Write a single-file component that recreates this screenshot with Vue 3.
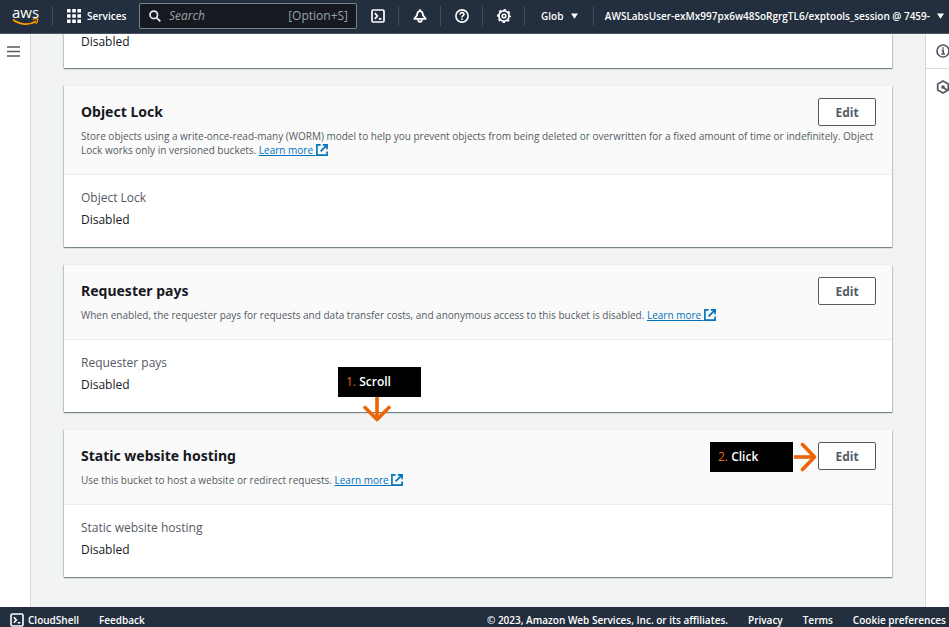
<script setup>
const panels = [
  {
    id: 'object-lock',
    title: 'Object Lock',
    text: 'Store objects using a write-once-read-many (WORM) model to help you prevent objects from being deleted or overwritten for a fixed amount of time or indefinitely. Object Lock works only in versioned buckets.',
  },
  {
    id: 'requester-pays',
    title: 'Requester pays',
    text: 'When enabled, the requester pays for requests and data transfer costs, and anonymous access to this bucket is disabled.',
    scrollHint: true,
  },
  {
    id: 'static-hosting',
    title: 'Static website hosting',
    text: 'Use this bucket to host a website or redirect requests.',
    clickHint: true,
  },
]
</script>

<template>
  <div class="shell">
    <header class="topbar">
      <a class="logo" href="#" aria-label="aws">
        <span class="logo-text">aws</span>
        <svg class="smile" viewBox="0 0 28 8" aria-hidden="true">
          <path d="M1 1.4C8 7.2 18 7.6 25 3.2" fill="none" stroke="#f90" stroke-width="1.8" />
          <path d="M21.5 1.2C24 .4 26.3 .4 26.6 1C26.9 2 26 4.6 24.6 6" fill="none" stroke="#f90" stroke-width="1.3" />
        </svg>
      </a>
      <button class="services" type="button">
        <svg viewBox="0 0 14 14" width="14" height="14" fill="#fff" aria-hidden="true">
          <path d="M0 0h3.6v3.6H0zM5.2 0h3.6v3.6H5.2zM10.4 0H14v3.6h-3.6zM0 5.2h3.6v3.6H0zM5.2 5.2h3.6v3.6H5.2zM10.4 5.2H14v3.6h-3.6zM0 10.4h3.6V14H0zM5.2 10.4h3.6V14H5.2zM10.4 10.4H14V14h-3.6z" />
        </svg>
        <span>Services</span>
      </button>
      <label class="search">
        <svg viewBox="0 0 14 14" width="12" height="12" fill="none" stroke="#e6eaea" stroke-width="2" aria-hidden="true">
          <circle cx="5.6" cy="5.6" r="4.4" />
          <path d="M8.8 8.8L13.2 13.2" />
        </svg>
        <input type="text" placeholder="Search" aria-label="Search" />
        <span class="shortcut">[Option+S]</span>
      </label>
      <nav class="tools">
        <button class="tool" type="button" aria-label="CloudShell">
          <svg viewBox="0 0 14 14" width="14" height="14" fill="none" stroke="#fff" stroke-width="1.7" aria-hidden="true">
            <rect x="1" y="1" width="12" height="12" rx="1.2" />
            <path d="M3.8 4.2L6.4 7L3.8 9.8M7.8 9.8h2.6" />
          </svg>
        </button>
        <button class="tool" type="button" aria-label="Notifications">
          <svg viewBox="0 0 14 14" width="14" height="14" fill="none" stroke="#fff" stroke-width="1.8" stroke-linejoin="round" aria-hidden="true">
            <path d="M7 .2V2M1.3 9.8L4 6.4C4.2 3.4 5.2 2.2 7 2.2s2.8 1.2 3 4.2L12.7 9.8z" />
            <path d="M5.2 10.4c0 3.2 3.6 3.2 3.6 0" />
          </svg>
        </button>
        <button class="tool" type="button" aria-label="Help">
          <svg viewBox="0 0 14 14" width="14" height="14" fill="none" stroke="#fff" stroke-width="1.6" aria-hidden="true">
            <circle cx="7" cy="7" r="6.1" />
            <path d="M5 5.6C5 2.8 9.1 3 9 5.5C8.9 6.8 7 6.7 7 8.4M7 9.4v1.5" />
          </svg>
        </button>
        <button class="tool" type="button" aria-label="Settings">
          <svg viewBox="0 0 14 14" width="14" height="14" fill="none" stroke="#fff" aria-hidden="true">
            <circle cx="7" cy="7" r="5.1" stroke-width="1.8" />
            <circle cx="7" cy="7" r="6.3" stroke-width="1.4" stroke-dasharray="2.5 2.448" stroke-dashoffset="1.25" />
            <circle cx="7" cy="7" r="1.8" stroke-width="1.6" />
          </svg>
        </button>
      </nav>
      <button class="region" type="button">
        <span>Glob</span>
        <svg class="caret" viewBox="0 0 8 6" aria-hidden="true"><path d="M0 0h8L4 6z" fill="#fff" /></svg>
      </button>
      <button class="account" type="button">
        <span>AWSLabsUser-exMx997px6w48SoRgrgTL6/exptools_session @ 7459-</span>
        <svg class="caret" viewBox="0 0 8 6" aria-hidden="true"><path d="M0 0h8L4 6z" fill="#fff" /></svg>
      </button>
    </header>

    <div class="workspace">
      <aside class="rail left">
        <button class="rail-button" type="button" aria-label="Open navigation">
          <svg viewBox="0 0 13 11" width="13" height="11" stroke="#545b64" stroke-width="1.6" aria-hidden="true">
            <path d="M0 1h13M0 5.5h13M0 10h13" />
          </svg>
        </button>
      </aside>

      <main class="content">
        <section class="card first">
          <div class="value">Disabled</div>
        </section>

        <section v-for="p in panels" :key="p.id" class="card">
          <div class="card-head">
            <div class="title-row">
              <h2>{{ p.title }}</h2>
              <div class="action">
                <div v-if="p.clickHint" class="hint click-hint">
                  <div class="hint-box"><b>2.</b> <span>Click</span></div>
                  <svg viewBox="0 0 24 30" width="24" height="30" fill="none" stroke="#ec6508" stroke-width="3.6" aria-hidden="true">
                    <path d="M1 15H21" />
                    <path d="M9.5 2.5L21.5 15L9.5 27.5" stroke-linecap="round" stroke-linejoin="round" />
                  </svg>
                </div>
                <button class="edit" type="button">Edit</button>
              </div>
            </div>
            <p>
              {{ p.text }}
              <a href="#">Learn more <svg class="external" viewBox="0 0 13 13" fill="none" stroke="#0073bb" stroke-width="1.8" aria-hidden="true"><path d="M5 1H1v11h11V8M7.4 1H12v4.6M12 1L5 8" /></svg></a>
            </p>
          </div>
          <div class="card-body">
            <div class="label">{{ p.title }}</div>
            <div class="value">Disabled</div>
          </div>
          <div v-if="p.scrollHint" class="hint scroll-hint">
            <div class="hint-box"><b>1.</b> <span>Scroll</span></div>
            <svg viewBox="0 0 30 25" width="30" height="25" fill="none" stroke="#ec6508" stroke-width="3.6" aria-hidden="true">
              <path d="M15 0V22" />
              <path d="M3 10.5L15 22.5L27 10.5" stroke-linecap="round" stroke-linejoin="round" />
            </svg>
          </div>
        </section>
      </main>

      <aside class="rail right">
        <button class="rail-button" type="button" aria-label="Info">
          <svg viewBox="0 0 14 14" width="14" height="14" fill="none" stroke="#545b64" stroke-width="1.7" aria-hidden="true">
            <circle cx="7" cy="7" r="6" />
            <path d="M7 3.2v1.6M5.6 6.4H7.2V10M5.2 10h3.8" />
          </svg>
        </button>
        <button class="rail-button" type="button" aria-label="Resources">
          <svg viewBox="0 0 14 14" width="14" height="14" fill="none" stroke="#545b64" stroke-width="1.7" stroke-linejoin="round" aria-hidden="true">
            <path d="M7 .9L12.3 3.9V10.1L7 13.1L1.7 10.1V3.9z" />
            <circle cx="7" cy="7" r="1" fill="#545b64" />
            <path d="M7.5 7.5L11.5 10.5" />
          </svg>
        </button>
      </aside>
    </div>

    <footer class="footer">
      <a class="shell-link" href="#">
        <svg viewBox="0 0 14 14" width="14" height="14" fill="none" stroke="#fff" stroke-width="1.6" aria-hidden="true">
          <rect x="1" y="1" width="12" height="12" rx="1.5" />
          <path d="M3.8 4.2L6.4 7L3.8 9.8M7.8 9.8h2.6" />
        </svg>
        <span>CloudShell</span>
      </a>
      <a href="#">Feedback</a>
      <span class="copyright">© 2023, Amazon Web Services, Inc. or its affiliates.</span>
      <a href="#">Privacy</a>
      <a href="#">Terms</a>
      <a href="#">Cookie preferences</a>
    </footer>
  </div>
</template>

<style>
body {
  overflow: hidden;
}
</style>

<style scoped>
.shell {
  display: flex;
  flex-direction: column;
  height: 100vh;
  overflow: hidden;
  background: #f2f3f3;
  color: #16191f;
  font-family: "Open Sans", "Noto Sans", sans-serif;
  font-size: 12px;
}
.shell * {
  box-sizing: border-box;
}
button {
  margin: 0;
  padding: 0;
  border: 0;
  background: none;
  color: inherit;
  font: inherit;
}
svg {
  display: block;
  flex: none;
}
.topbar {
  display: flex;
  flex: none;
  align-items: center;
  height: 34px;
  padding-bottom: 2px;
  border-bottom: 1px solid #4c5663;
  background: #232f3e;
  color: #fff;
  font-size: 10px;
  font-weight: 600;
  white-space: nowrap;
}
.logo {
  width: 53px;
  padding-left: 12px;
  border-right: 1px solid #414c59;
  color: #fff;
  text-decoration: none;
}
.logo-text {
  display: block;
  font-size: 15px;
  font-weight: 500;
  line-height: 12px;
}
.smile {
  width: 27px;
  height: 8px;
}
.services {
  display: flex;
  align-items: center;
  gap: 6px;
  width: 86px;
  padding-left: 14px;
}
.search {
  display: flex;
  align-items: center;
  gap: 8px;
  width: 218px;
  height: 26px;
  padding: 0 8px 0 9px;
  border: 1px solid #78878a;
  border-radius: 2px;
  background: #16191f;
  color: #95a5a6;
  font-size: 12px;
  font-weight: 400;
}
.search input {
  flex: 1;
  min-width: 0;
  padding: 0;
  border: 0;
  outline: 0;
  background: none;
  color: #fff;
  font: inherit;
}
.search input::placeholder {
  color: #95a5a6;
  font-style: italic;
  opacity: 1;
}
.tools {
  display: flex;
}
.tool {
  display: flex;
  align-items: center;
  justify-content: center;
  width: 42px;
  height: 20px;
  border-right: 1px solid #414c59;
}
.region {
  display: flex;
  align-items: center;
  gap: 8px;
  width: 69px;
  height: 20px;
  padding-left: 16px;
  border-right: 1px solid #414c59;
}
.account {
  display: flex;
  flex: 1;
  align-items: center;
  justify-content: flex-end;
  gap: 7px;
  padding-right: 5px;
}
.caret {
  width: 7px;
  height: 6px;
}
.workspace {
  display: grid;
  flex: 1;
  grid-template-columns: 31px 1fr 24px;
  min-height: 0;
}
.rail {
  overflow: hidden;
  background: #fff;
}
.rail.left {
  border-right: 1px solid #d5dbdb;
}
.rail.right {
  border-left: 1px solid #d5dbdb;
}
.rail-button {
  display: flex;
  align-items: center;
  height: 35px;
}
.left .rail-button {
  padding-left: 7px;
}
.right .rail-button {
  width: 100%;
  padding-left: 10px;
}
.right .rail-button:first-child {
  border-bottom: 1px solid #d5dbdb;
}
.content {
  display: flex;
  flex-direction: column;
  gap: 18px;
  padding: 0 33px;
}
.card {
  position: relative;
  background: #fff;
  box-shadow: 0 1px 1px rgba(0, 28, 36, 0.4), 1px 1px 1px rgba(0, 28, 36, 0.15), -1px 0 1px rgba(0, 28, 36, 0.15);
}
.card.first {
  height: 34px;
  padding: 0 17px;
}
.first .value {
  line-height: 16px;
}
.card-head {
  padding: 12px 16px 16px 17px;
  border-bottom: 1px solid #eaeded;
  background: #fafafa;
}
.title-row {
  display: flex;
  align-items: flex-start;
  justify-content: space-between;
}
h2 {
  margin: 0;
  font-family: "Noto Sans", "Open Sans", sans-serif;
  font-size: 14px;
  font-weight: 700;
  line-height: 28px;
}
.action {
  position: relative;
}
.edit {
  display: block;
  width: 58px;
  height: 28px;
  border: 1px solid #545b64;
  border-radius: 2px;
  background: #fff;
  color: #545b64;
  font-weight: 700;
}
p {
  margin: 3px 0 0;
  padding-bottom: 1px;
  color: #545b64;
  font-size: 10px;
  font-weight: 500;
  line-height: 14px;
}
p a {
  color: #0073bb;
  white-space: nowrap;
}
.external {
  display: inline-block;
  width: 12px;
  height: 12px;
  vertical-align: -2px;
}
.card-body {
  padding: 12px 17px 16px;
  line-height: 22px;
}
.label {
  color: #545b64;
}
.value {
  font-weight: 500;
}
.hint {
  position: absolute;
  z-index: 1;
  display: flex;
  align-items: center;
}
.hint-box {
  width: 83px;
  height: 30px;
  padding-left: 8px;
  background: #000;
  color: #fff;
  font-weight: 600;
  line-height: 29px;
}
.hint-box b {
  color: #ec6508;
  font-weight: 400;
}
.scroll-hint {
  top: 102px;
  left: 274px;
  flex-direction: column;
  align-items: flex-start;
}
.scroll-hint svg {
  margin-left: 24px;
}
.click-hint {
  top: 0;
  right: 100%;
  margin-right: 1px;
}
.footer {
  display: flex;
  flex: none;
  align-items: flex-start;
  height: 20px;
  padding: 5px 3px 0 10px;
  background: #232f3e;
  color: #fff;
  font-size: 10px;
  font-weight: 600;
  line-height: 16px;
  gap: 20px;
  white-space: nowrap;
}
.footer a {
  color: #fff;
  text-decoration: none;
}
.shell-link {
  display: flex;
  align-items: center;
  gap: 4px;
}
.copyright {
  margin-left: auto;
}
</style>
